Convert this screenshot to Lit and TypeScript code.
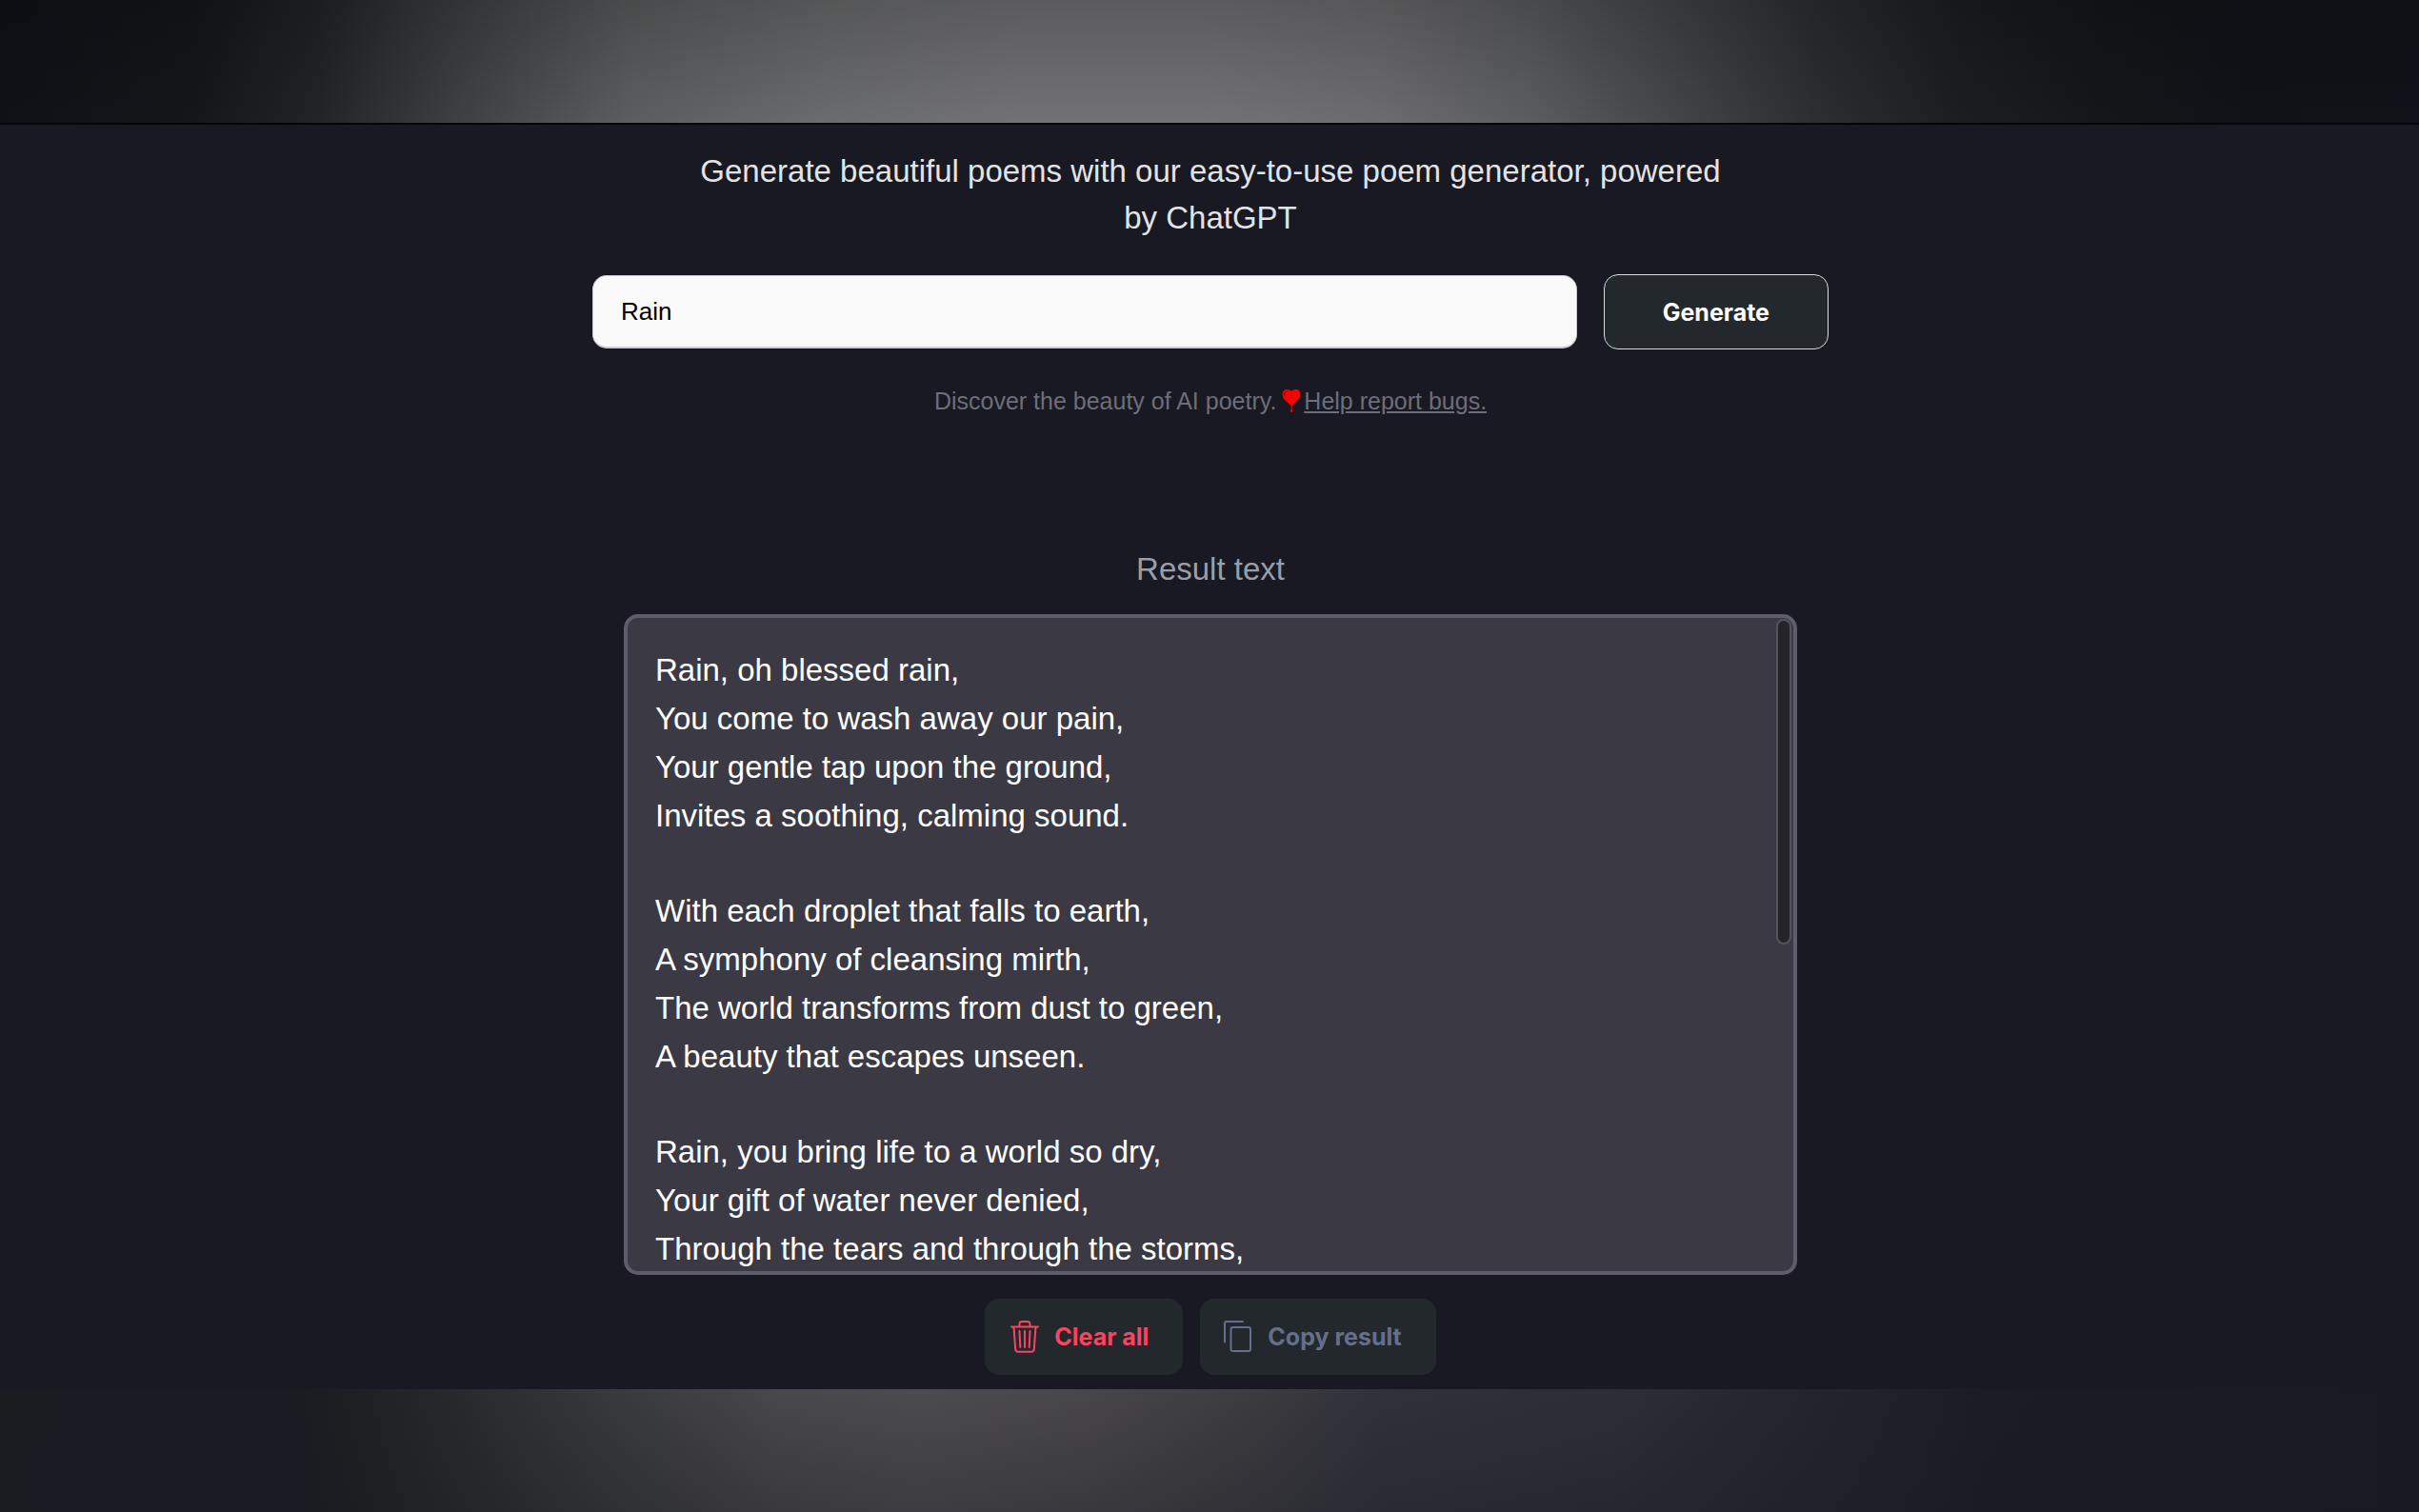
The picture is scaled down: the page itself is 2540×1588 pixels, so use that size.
import { LitElement, html, css } from "lit";
import { customElement, state } from "lit/decorators.js";

const POEM: string[][] = [
  [
    "Rain, oh blessed rain,",
    "You come to wash away our pain,",
    "Your gentle tap upon the ground,",
    "Invites a soothing, calming sound.",
  ],
  [
    "With each droplet that falls to earth,",
    "A symphony of cleansing mirth,",
    "The world transforms from dust to green,",
    "A beauty that escapes unseen.",
  ],
  [
    "Rain, you bring life to a world so dry,",
    "Your gift of water never denied,",
    "Through the tears and through the storms,",
  ],
];

const heartIcon = html`<svg class="heart" viewBox="0 0 20 26" aria-hidden="true">
  <path
    fill="#ff0000"
    d="M10 3C8.600 1.100 6.400 .5 4.300 1.100 1.800 1.900 .3 4.200 .5 6.800c.3 3.500 3.200 5.900 5.700 8.100 1.400 1.200 2.600 2.300 3.400 3.600v3c-.5 .8-.6 1.700-.3 2.700.3 .9 1.600 .9 1.800 0 .2-1 .1-1.900-.4-2.700v-3c.6-1.300 1.800-2.500 3.200-3.800 2.500-2.300 5.300-4.700 5.600-8 .2-2.600-1.300-4.900-3.800-5.600C13.600 .5 11.400 1.100 10 3z"
  />
  <path fill="none" stroke="#5a0d12" stroke-width="1" stroke-linecap="round" d="M2.500 7c0-2.200 1.100-3.700 3.300-4.200" />
</svg>`;

const trashIcon = html`<svg class="icon" viewBox="0 0 30 36" aria-hidden="true">
  <g fill="none" stroke="currentColor" stroke-width="2" stroke-linecap="round" stroke-linejoin="round">
    <path d="M1 7.500h28" />
    <path d="M9.500 7V4.500a2.500 2.500 0 0 1 2.500-2.500h6a2.500 2.500 0 0 1 2.500 2.500V7" />
    <path d="M3.500 8l1.700 23a3 3 0 0 0 3 2.800h13.600a3 3 0 0 0 3-2.800L26.500 8" />
    <path d="M9.500 12l.8 17M15 12v17M20.500 12l-.8 17" />
  </g>
</svg>`;

const copyIcon = html`<svg class="icon" viewBox="0 0 30 36" aria-hidden="true">
  <g fill="none" stroke="currentColor" stroke-width="2" stroke-linecap="round" stroke-linejoin="round">
    <path d="M20 2H3A2 2 0 0 0 1 4V23.500" />
    <rect x="7.500" y="8" width="20.500" height="25" rx="2" />
  </g>
</svg>`;

@customElement("app-root")
export class AppRoot extends LitElement {
  static styles = css`
    :host {
      display: flex;
      flex-direction: column;
      min-height: 100vh;
      background: #181922;
      color: #fff;
      font-family: "Liberation Sans", Arial, Helvetica, sans-serif;
      font-size: 33px;
    }
    * {
      box-sizing: border-box;
    }
    .glow-top {
      height: 131px;
      border-bottom: 2px solid #050509;
      background: linear-gradient(rgba(0, 0, 0, 0.2), rgba(0, 0, 0, 0)),
        linear-gradient(
          90deg,
          #101118 0%,
          #15161a 8%,
          #222325 13%,
          #3f4041 19%,
          #5c5d5e 26%,
          #6a6b6c 34%,
          #727274 42%,
          #727274 50%,
          #6c6c6e 57%,
          #5c5d5f 63%,
          #454647 69%,
          #2c2e2f 75%,
          #1b1d1f 81%,
          #15161a 87%,
          #111219 93%,
          #11121a 100%
        );
    }
    .glow-bottom {
      flex: 1;
      min-height: 100px;
      background: linear-gradient(rgba(24, 25, 34, 0), rgba(24, 25, 34, 0.3)),
        linear-gradient(
          90deg,
          #1b1c20 0%,
          #1a1b23 4%,
          #191a22 11%,
          #1f2022 15%,
          #2b2c2e 20%,
          #3a3b3c 26%,
          #48474a 32%,
          #4c4b4f 38%,
          #48464a 45%,
          #3c3b40 52%,
          #31313b 57%,
          #2d2d38 67%,
          #25252e 74%,
          #1c1c26 82%,
          #191a22 89%,
          #181921 100%
        );
    }
    .page {
      display: flex;
      flex-direction: column;
      align-items: center;
      padding: 24px 22px 15px 24px;
    }
    .intro {
      margin: 0 0 35px;
      max-width: 1090px;
      text-align: center;
      font-weight: 400;
      font-size: 33px;
      line-height: 49px;
      color: #e3e3e6;
    }
    .prompt {
      display: flex;
      align-items: center;
      gap: 28px;
      width: 100%;
      max-width: 1298px;
    }
    .topic {
      flex: 1;
      min-width: 0;
      height: 77px;
      padding: 0 29px;
      border: 1px solid #c9ccd3;
      border-bottom-width: 2px;
      border-radius: 15px;
      background: #fafafb;
      color: #000;
      font: 26px "Liberation Sans", Arial, sans-serif;
    }
    .button {
      display: flex;
      align-items: center;
      justify-content: center;
      height: 79px;
      border: 0;
      border-radius: 15px;
      background: #23282d;
      color: #fff;
      font: 700 25px Inter, sans-serif;
    }
    .generate {
      padding: 0 61px;
      border: 1px solid #d9dbde;
    }
    .note {
      display: flex;
      align-items: center;
      margin: 38px 0 141px;
      font-size: 25px;
      line-height: 32px;
      color: #6d6e7a;
    }
    .note a {
      color: inherit;
    }
    .heart {
      width: 20px;
      height: 26px;
      margin: 0 3px 0 6px;
    }
    .result-title {
      margin: 0 0 27px;
      font-weight: 400;
      font-size: 33px;
      line-height: 40px;
      color: #9b9ea8;
    }
    .result {
      position: relative;
      width: 100%;
      max-width: 1232px;
      border: 4px solid #5f5d6b;
      border-radius: 15px;
      background: #3b3a44;
      overflow: hidden;
    }
    .poem {
      height: 686px;
      padding: 29px;
      overflow-y: auto;
      scrollbar-width: none;
      outline: none;
    }
    .stanza {
      margin: 0 0 49px;
      line-height: 51px;
      white-space: pre-line;
    }
    .thumb {
      position: absolute;
      top: 1px;
      right: 2px;
      width: 16px;
      height: 342px;
      border: 2px solid #55535f;
      border-radius: 8px;
      background: #242528;
    }
    .actions {
      display: flex;
      gap: 18px;
      margin-top: 25px;
    }
    .action {
      height: 80px;
      gap: 16px;
      padding: 0 36px 0 27px;
    }
    .clear {
      color: #fb4462;
    }
    .copy {
      padding-left: 25px;
      color: #64708b;
    }
    .icon {
      width: 30px;
      height: 36px;
    }
  `;

  @state() private topic = "Rain";
  @state() private poem = POEM;

  private onInput(e: Event) {
    this.topic = (e.target as HTMLInputElement).value;
  }

  private clear() {
    this.topic = "";
    this.poem = [];
  }

  private copy() {
    navigator.clipboard?.writeText(this.poem.map((s) => s.join("\n")).join("\n\n"));
  }

  private generate(e: Event) {
    e.preventDefault();
    this.poem = POEM;
  }

  render() {
    return html`
      <div class="glow-top"></div>
      <main class="page">
        <h1 class="intro">Generate beautiful poems with our easy-to-use poem generator, powered by ChatGPT</h1>
        <form class="prompt" @submit=${this.generate}>
          <input class="topic" type="text" aria-label="Poem topic" .value=${this.topic} @input=${this.onInput} />
          <button class="button generate" type="submit">Generate</button>
        </form>
        <p class="note"><span>Discover the beauty of AI poetry.</span>${heartIcon}<a href="#bugs">Help report bugs.</a></p>
        <h2 class="result-title" id="result-title">Result text</h2>
        <section class="result" aria-labelledby="result-title">
          <div class="poem" tabindex="0">
            ${this.poem.map((stanza) => html`<p class="stanza">${stanza.join("\n")}</p>`)}
          </div>
          <div class="thumb"></div>
        </section>
        <div class="actions">
          <button class="button action clear" type="button" @click=${this.clear}>${trashIcon}Clear all</button>
          <button class="button action copy" type="button" @click=${this.copy}>${copyIcon}Copy result</button>
        </div>
      </main>
      <div class="glow-bottom"></div>
    `;
  }
}
